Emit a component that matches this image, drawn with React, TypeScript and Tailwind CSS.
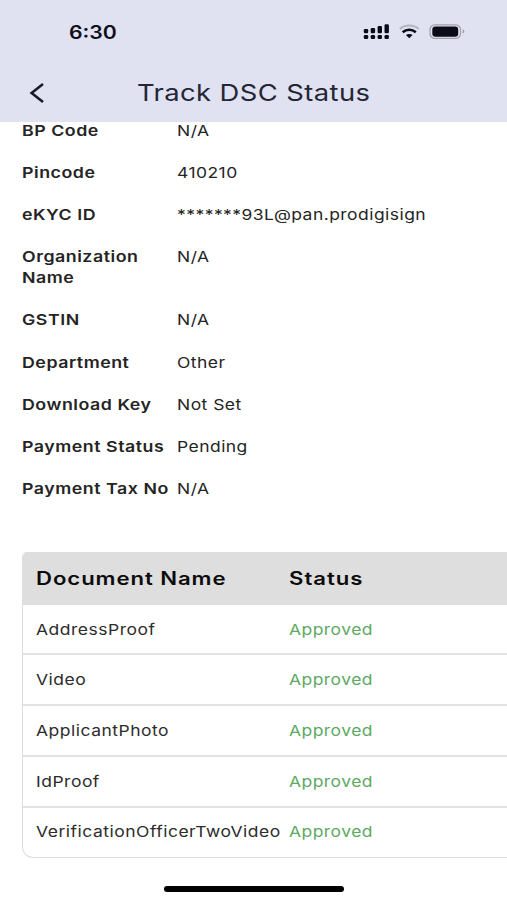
import React from 'react';

const details = [
  { label: 'BP Code', value: 'N/A' },
  { label: 'Pincode', value: '410210' },
  { label: 'eKYC ID', value: '*******93L@pan.prodigisign' },
  { label: 'Organization Name', value: 'N/A' },
  { label: 'GSTIN', value: 'N/A' },
  { label: 'Department', value: 'Other' },
  { label: 'Download Key', value: 'Not Set' },
  { label: 'Payment Status', value: 'Pending' },
  { label: 'Payment Tax No', value: 'N/A' },
];

const documents = [
  { name: 'AddressProof', status: 'Approved' },
  { name: 'Video', status: 'Approved' },
  { name: 'ApplicantPhoto', status: 'Approved' },
  { name: 'IdProof', status: 'Approved' },
  { name: 'VerificationOfficerTwoVideo', status: 'Approved' },
];

const StatusBar = () => (
  <div className="flex h-16 items-center justify-between pl-[69px] pr-[41px]">
    <span className="origin-left scale-x-[1.18] text-[18px] font-semibold text-[#10101c]">6:30</span>
    <svg width="103" height="18" viewBox="0 0 103 18" fill="#0b0b16">
      {/* Dual SIM signal */}
      <rect x="0.8" y="6" width="4.4" height="4.2" rx="1.3" />
      <rect x="7.7" y="5" width="4.4" height="5.2" rx="1.3" />
      <rect x="14.6" y="3" width="4.4" height="7.2" rx="1.3" />
      <rect x="21.5" y="1.2" width="4.4" height="9" rx="1.3" />
      <rect x="0.8" y="12" width="4.4" height="4" rx="1.3" />
      <rect x="7.7" y="12" width="4.4" height="4" rx="1.3" />
      <rect x="14.6" y="12" width="4.4" height="4" rx="1.3" />
      <rect x="21.5" y="12" width="4.4" height="4" rx="1.3" />
      {/* Wifi */}
      <path d="M36.8 6C42 1.4 50.5 1.4 55.7 6" fill="none" stroke="#b3b4c0" strokeWidth="2" />
      <path d="M39.7 9.2C43.5 5.9 49 5.9 52.8 9.2" fill="none" stroke="#0b0b16" strokeWidth="2.6" />
      <path d="M42.9 12.1C44.8 10.5 47.7 10.5 49.6 12.1L46.25 15.2Z" />
      {/* Battery */}
      <rect x="67" y="1.8" width="30.5" height="13.6" rx="4.8" fill="none" stroke="#a0a1ae" strokeWidth="1.2" />
      <rect x="69.3" y="3.5" width="25.9" height="10.2" rx="3.2" />
      <path d="M99.7 6.6C102 7.4 102 9.8 99.7 10.6Z" fill="#a0a1ae" />
    </svg>
  </div>
);

const Header = () => (
  <header className="h-[122px] bg-[#e0e2f1]">
    <StatusBar />
    <div className="flex h-[58px] items-center pl-[29px]">
      <svg width="16" height="22" viewBox="0 0 16 22" fill="none" stroke="#191b28" strokeWidth="2.6">
        <path d="M14 1.9L2.6 11L14 20.1" />
      </svg>
      <h1 className="ml-[92px] origin-left scale-x-[1.2] whitespace-nowrap text-[22.8px] tracking-[0.35px] text-[#242636]">
        Track DSC Status
      </h1>
    </div>
  </header>
);

const DetailsList = () => (
  <dl className="-mt-3 pl-[22px] text-[14.8px] leading-[21.1px] text-[#242424]">
    {details.map(item => (
      <div key={item.label} className="flex py-[10.55px]">
        <dt className="w-[155px] shrink-0 font-semibold">
          <span className="block w-[128px] origin-left scale-x-[1.2] tracking-[0.45px]">{item.label}</span>
        </dt>
        <dd className="origin-left scale-x-[1.18] whitespace-nowrap tracking-[0.4px]">{item.value}</dd>
      </div>
    ))}
  </dl>
);

const DocumentTable = () => (
  <div className="ml-[22px] mt-[41px] overflow-hidden rounded-tl-[5px] rounded-bl-[11px] border-b border-l border-[#dedede]">
    <div className="flex h-[53px] items-center bg-[#dedede] pl-[13px] text-[18px] font-semibold text-[#0c0c0c]">
      <div className="w-[253px] shrink-0">
        <span className="inline-block origin-left scale-x-[1.23] tracking-[0.75px]">Document Name</span>
      </div>
      <span className="origin-left scale-x-[1.23] tracking-[0.8px]">Status</span>
    </div>
    {documents.map(doc => (
      <div
        key={doc.name}
        className="flex h-[50.7px] items-center border-b-2 border-[#e2e2e2] pl-[13px] pt-px text-[14.8px] text-[#2c2c2c] last:h-[49px] last:border-b-0"
      >
        <div className="w-[253px] shrink-0">
          <span className="inline-block origin-left scale-x-[1.18] whitespace-nowrap tracking-[0.44px]">{doc.name}</span>
        </div>
        <span className="origin-left scale-x-[1.18] tracking-[0.4px] text-[#5da963]">{doc.status}</span>
      </div>
    ))}
  </div>
);

const App = () => {
  return (
    <div className="flex h-[900px] w-[507px] flex-col overflow-hidden bg-white font-['Inter',sans-serif]">
      <Header />
      <DetailsList />
      <DocumentTable />
      <div className="ml-[164px] mt-[28px] h-[6px] w-[180px] shrink-0 rounded-full bg-black" />
    </div>
  );
};

export default App;
